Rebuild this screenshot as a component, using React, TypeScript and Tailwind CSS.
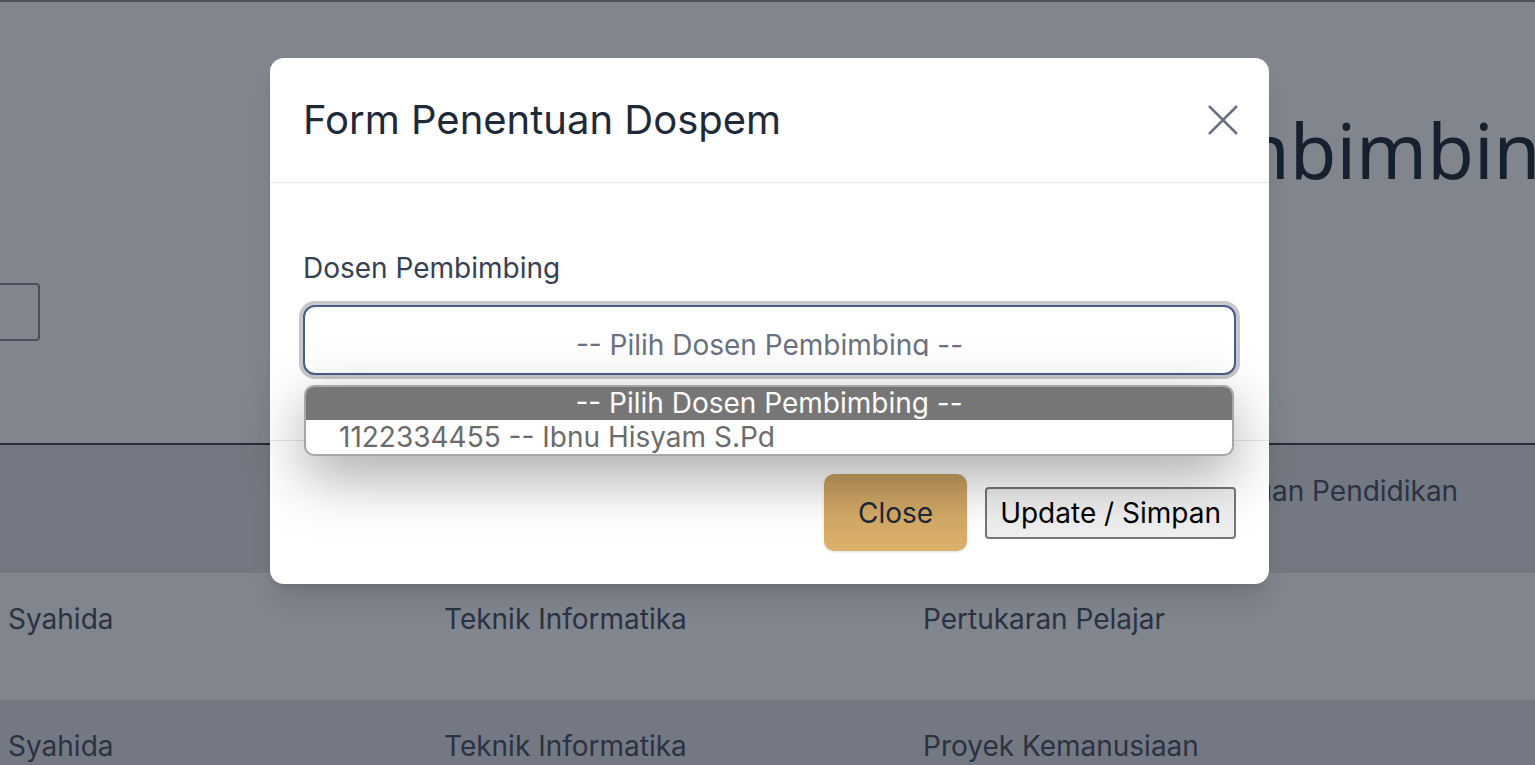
import React from "react";

const rows = [
  { nama: "Syahida", prodi: "Teknik Informatika", program: "Pertukaran Pelajar" },
  { nama: "Syahida", prodi: "Teknik Informatika", program: "Proyek Kemanusiaan" },
];

const DospemModal = () => {
  return (
    <div className="absolute inset-0 bg-[rgba(17,24,39,0.53)]">
      <div className="absolute left-[270px] top-[58px] flex h-[526px] w-[999px] flex-col rounded-[14px] bg-white shadow-xl">
        <div className="flex h-[125px] items-center justify-between border-b border-[#e5e7eb] pl-[33px] pr-[31px]">
          <h3 className="text-[40px] leading-none text-gray-800">Form Penentuan Dospem</h3>
          <svg width="30" height="30" viewBox="0 0 30 30" className="text-gray-500">
            <path d="M1 1 29 29M29 1 1 29" stroke="currentColor" strokeWidth="2.5" fill="none" />
          </svg>
        </div>

        <div className="h-[257px] px-[33px] pt-[67px]">
          <label className="block text-[28px] leading-[36px] text-gray-700">Dosen Pembimbing</label>
          <div className="mt-[19px] h-[70px] rounded-[12px] border-2 border-[#4a5e85] bg-white pt-[20px] text-center shadow-[0_0_0_4px_#c6c8cd]">
            <div className="h-[29px] overflow-hidden text-[28px] leading-[36px] text-gray-500">
              -- Pilih Dosen Pembimbing --
            </div>
          </div>
        </div>

        <div className="flex flex-1 items-center justify-end gap-[18px] border-t border-[#e5e7eb] pr-[33px]">
          <button className="h-[77px] w-[143px] rounded-[10px] bg-gradient-to-b from-[#c9a061] to-[#dcb16a] text-[28px] text-gray-800 shadow-sm">
            Close
          </button>
          <button className="h-[52px] rounded-[4px] border-2 border-[#767676] bg-[#efefef] px-[13px] text-[28px] text-black">
            Update / Simpan
          </button>
        </div>

        <div className="absolute left-[34px] top-[327px] w-[930px] overflow-hidden rounded-[10px] border-2 border-[#a6a6a6] bg-white text-[28px] shadow-[0_20px_60px_rgba(0,0,0,0.35)]">
          <div className="h-[33px] bg-[#767676] text-center leading-[32px] text-white">
            -- Pilih Dosen Pembimbing --
          </div>
          <div className="h-[34px] pl-[33px] leading-[34px] text-[#6b6b6b]">
            1122334455 -- Ibnu Hisyam S.Pd
          </div>
        </div>
      </div>
    </div>
  );
};

export default function App() {
  return (
    <div className="relative h-[765px] w-full overflow-hidden bg-white font-['Inter',sans-serif]">
      <div className="border-t-2 border-[#8f939b]">
        <div className="h-[441px] pt-[110px]">
          <h1 className="ml-[473px] whitespace-nowrap font-['Noto_Sans',sans-serif] text-[76px] leading-[76px] text-gray-800">
            Penentuan Dosen Pembimbing
          </h1>
          <div className="ml-[-160px] mt-[95px] h-[58px] w-[200px] rounded-[4px] border-2 border-[#8a8b93]" />
        </div>

        <div className="border-t-2 border-[#3e404b] text-[28px] text-[#475063]">
          <div className="grid h-[128px] grid-cols-[436px_479px_1fr] bg-[#e2e3e7] pl-[8px] pt-[28px] leading-[36px]">
            <div></div>
            <div>Program Studi</div>
            <div className="whitespace-nowrap pl-[14px]">Program Kegiatan di Satuan Pendidikan</div>
          </div>
          {rows.map((r, i) => (
            <div
              key={i}
              className={`grid h-[127px] grid-cols-[436px_479px_1fr] pl-[8px] pt-[28px] leading-[36px] ${
                i % 2 === 1 ? "bg-[#e4e4e8]" : "bg-white"
              }`}
            >
              <div>{r.nama}</div>
              <div>{r.prodi}</div>
              <div>{r.program}</div>
            </div>
          ))}
        </div>
      </div>

      <DospemModal />
    </div>
  );
}
